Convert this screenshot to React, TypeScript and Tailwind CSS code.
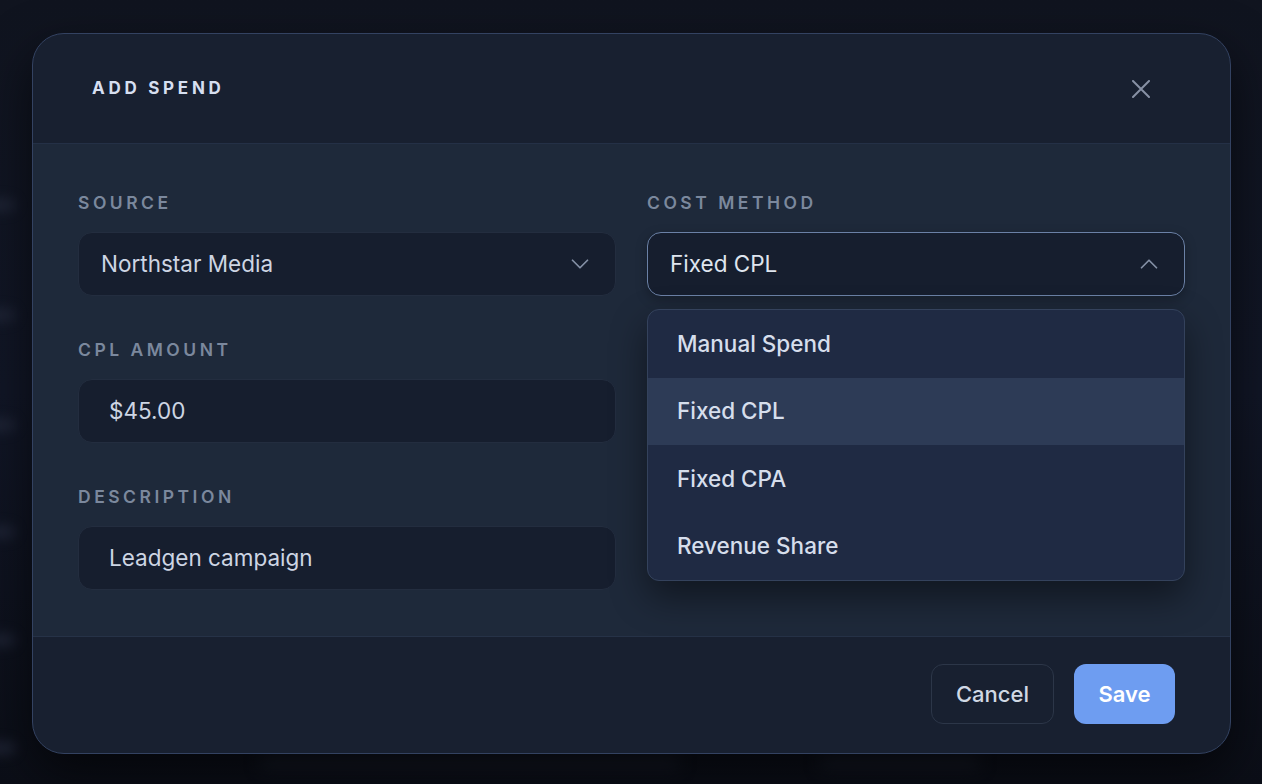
import React from "react";
import { ChevronDown, ChevronUp } from "lucide-react";

const font = { fontFamily: "Inter, 'Noto Sans', sans-serif" };

function Label({ children }: { children: React.ReactNode }) {
  return (
    <div className="h-5 mt-[2px] text-[17.5px] leading-5 font-semibold tracking-[0.2em] text-[#7b889d]">
      {children}
    </div>
  );
}

export default function App() {
  const options = ["Manual Spend", "Fixed CPL", "Fixed CPA", "Revenue Share"];
  return (
    <div
      className="relative w-full h-[784px] overflow-hidden bg-gradient-to-b from-[#10141f] via-[#111626] to-[#0b0e17]"
      style={font}
    >
      {/* blurred background content */}
      <div className="absolute inset-0 pointer-events-none">
        {[205, 315, 425, 532, 640, 748].map((y) => (
          <div
            key={y}
            className="absolute left-[-14px] w-[30px] h-[14px] rounded-full bg-[#262c3f] blur-[6px] opacity-60"
            style={{ top: y - 7 }}
          />
        ))}
        <div className="absolute left-[260px] top-[756px] w-[420px] h-[12px] rounded-full bg-[#171b27] blur-[8px]" />
        <div className="absolute left-[820px] top-[756px] w-[160px] h-[12px] rounded-full bg-[#171b27] blur-[8px]" />
      </div>

      <div className="relative flex pt-[33px] pl-[32px]">
        <div className="w-[1199px] rounded-[32px] border border-[#334261] bg-[#182030] shadow-[0_20px_50px_rgba(0,0,0,0.6)] overflow-visible">
          {/* Header */}
          <div className="h-[110px] flex items-center justify-between pl-[59px] pr-[80px] border-b border-[#243046] rounded-t-[32px]">
            <div className="text-[17px] font-bold tracking-[0.22em] text-[#d6dff0]">
              ADD SPEND
            </div>
            <svg width="18" height="18" viewBox="0 0 18 18" fill="none" stroke="#8791a5" strokeWidth="2" strokeLinecap="round">
              <path d="M1 1L17 17M17 1L1 17" />
            </svg>
          </div>

          {/* Body */}
          <div className="bg-[#1e293a] px-[45px] pt-[47px] pb-[46px] grid grid-cols-2 gap-x-[31px] border-b border-[#263247]">
            <div className="flex flex-col gap-[42px]">
              <div className="flex flex-col gap-[19px]">
                <Label>SOURCE</Label>
                <div className="h-[64px] rounded-[14px] bg-[#161e2e] border border-[#232d3f] flex items-center justify-between pl-[22px] pr-[20px]">
                  <span className="text-[22.5px] text-[#cdd5e3]">Northstar Media</span>
                  <ChevronDown size={30} strokeWidth={1.4} className="text-[#8490a5]" />
                </div>
              </div>
              <div className="flex flex-col gap-[19px]">
                <Label>CPL AMOUNT</Label>
                <div className="h-[64px] rounded-[14px] bg-[#161e2e] border border-[#232d3f] flex items-center pl-[30px]">
                  <span className="text-[22.5px] text-[#cdd5e3]">$45.00</span>
                </div>
              </div>
              <div className="flex flex-col gap-[19px]">
                <Label>DESCRIPTION</Label>
                <div className="h-[64px] rounded-[14px] bg-[#161e2e] border border-[#232d3f] flex items-center pl-[30px]">
                  <span className="text-[22.5px] text-[#cdd5e3]">Leadgen campaign</span>
                </div>
              </div>
            </div>

            <div className="flex flex-col gap-[19px]">
              <Label>COST METHOD</Label>
              <div className="relative">
                <div className="h-[64px] rounded-[14px] bg-[#161e2e] border border-[#6b81a6] flex items-center justify-between pl-[22px] pr-[20px] shadow-[0_4px_12px_rgba(0,0,0,0.25)]">
                  <span className="text-[22.5px] text-[#dfe5ee]">Fixed CPL</span>
                  <ChevronUp size={30} strokeWidth={1.4} className="text-[#8490a5]" />
                </div>
                <div className="absolute left-0 right-0 top-[77px] z-10 rounded-[12px] border border-[#34425c] bg-[#1f2a43] overflow-hidden shadow-[0_16px_36px_rgba(0,0,0,0.45)]">
                  {options.map((o) => (
                    <div
                      key={o}
                      className={
                        "h-[67.5px] flex items-center pl-[29px] text-[22.5px] font-medium text-[#d6deec] " +
                        (o === "Fixed CPL" ? "bg-[#2d3b56]" : "")
                      }
                    >
                      {o}
                    </div>
                  ))}
                </div>
              </div>
            </div>
          </div>

          {/* Footer */}
          <div className="h-[116px] flex items-center justify-end gap-[20px] pr-[55px] pb-[2px] rounded-b-[32px]">
            <button className="h-[60px] w-[123px] rounded-[12px] border border-[#2c3648] bg-[#182030] text-[22px] font-medium text-[#d0d8e4]">
              Cancel
            </button>
            <button className="h-[60px] w-[101px] rounded-[12px] bg-[#6e9df1] text-[22px] font-semibold text-white">
              Save
            </button>
          </div>
        </div>
      </div>
    </div>
  );
}
